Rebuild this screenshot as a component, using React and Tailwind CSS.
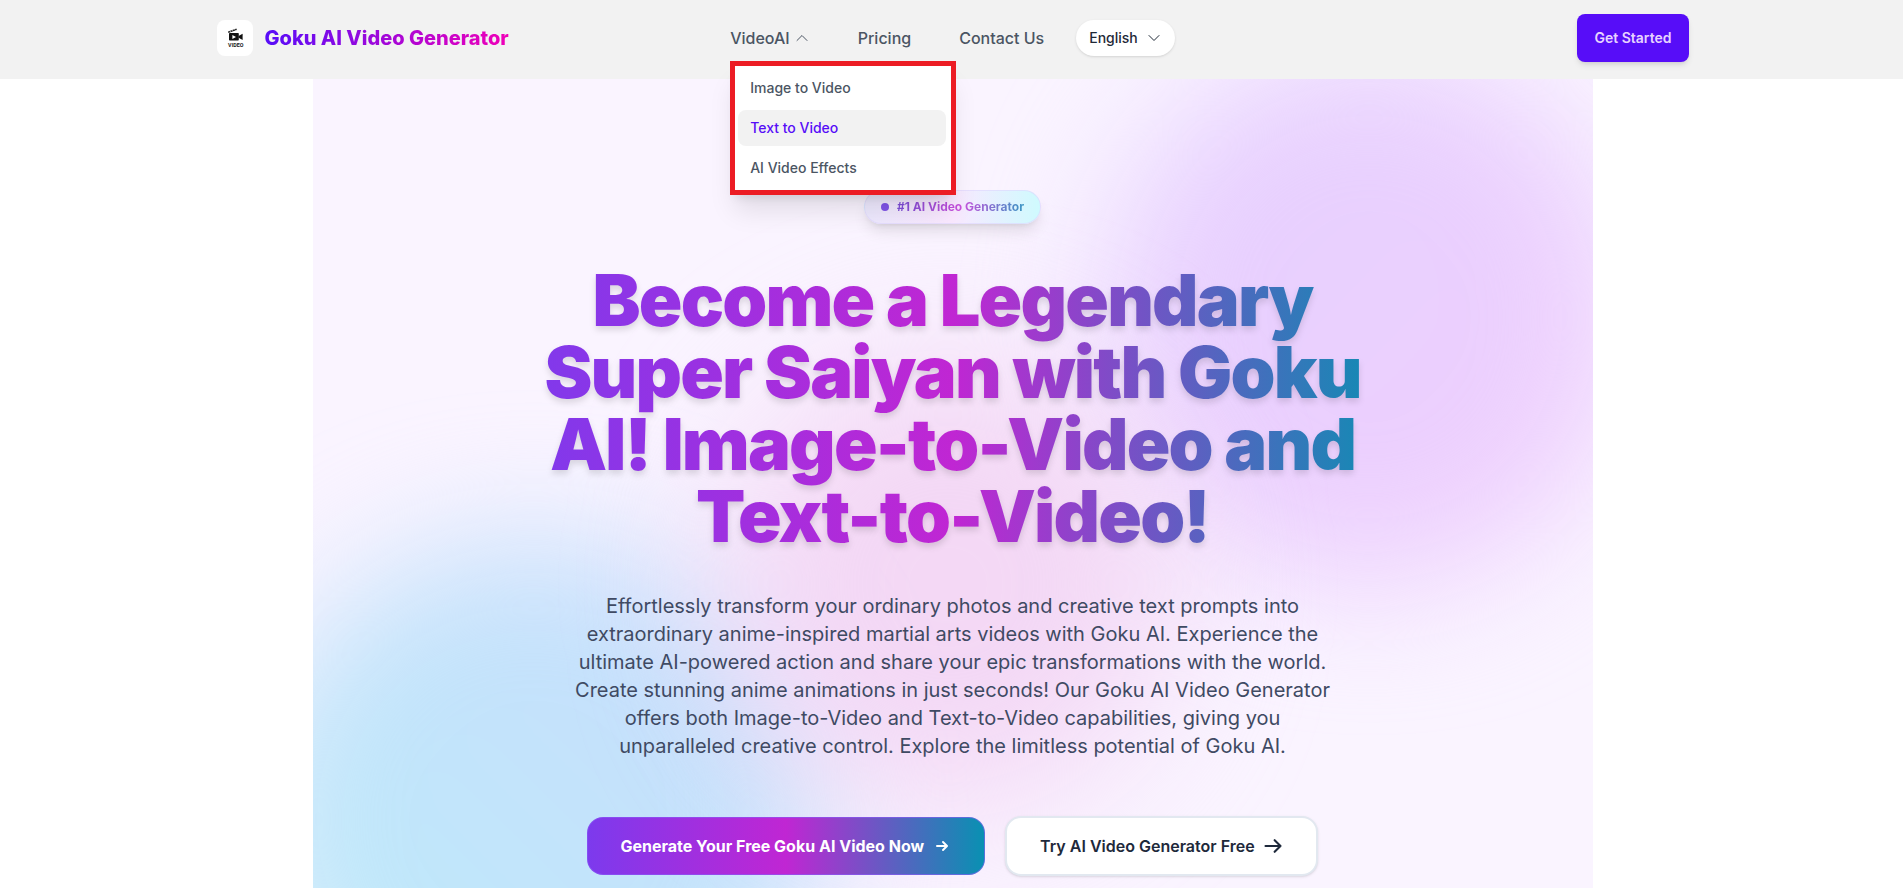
import React, { useState } from 'react';
import { HiOutlineChevronDown, HiOutlineChevronUp } from 'react-icons/hi2';

const menuItems = [
    { label: 'Image to Video', href: '#image-to-video' },
    { label: 'Text to Video', href: '#text-to-video' },
    { label: 'AI Video Effects', href: '#effects' },
];

const Logo = () => (
    <a href="#home" className="flex items-center gap-3">
        <span className="flex h-9 w-9 items-center justify-center rounded-lg bg-white">
            <svg viewBox="0 0 36 36" className="h-9 w-9" aria-hidden="true">
                <path d="M11 11.6 19.4 8.4l.5 1.6-8.5 3z" fill="#222" />
                <path d="m13 11 1 1.3m1.2-2.1 1 1.3m1.3-2.2 1 1.3" stroke="#fff" strokeWidth=".6" />
                <rect x="12" y="13" width="9.8" height="7.6" rx=".8" fill="#111" />
                <path d="m21.6 16 4-2.2v6.2l-4-2.2z" fill="#111" />
                <path d="m15.4 14.9 3.6 2-3.6 2z" fill="#fff" />
                <text x="18.8" y="26.8" textAnchor="middle" fontFamily="Roboto, sans-serif" fontSize="5.4" fontWeight="700" fill="#222">VIDEO</text>
            </svg>
        </span>
        <span className="bg-linear-to-r/srgb from-[#570df8] to-[#f000b8] bg-clip-text text-xl font-extrabold text-transparent">
            Goku AI Video Generator
        </span>
    </a>
);

const VideoMenu = () => {
    const [open, setOpen] = useState(true);

    return (
        <div className="relative">
            <button onClick={() => setOpen(!open)} aria-expanded={open} className="flex items-center gap-1">
                VideoAI
                {open ? <HiOutlineChevronUp className="h-4 w-4" /> : <HiOutlineChevronDown className="h-4 w-4" />}
            </button>
            {open && (
                <div className="absolute top-full left-0 z-20 mt-[11px] flex w-[226px] flex-col gap-1 border-[5px] border-[#ec1c24] bg-white py-1 pr-[5px] pl-[3px] text-sm shadow-xl">
                    {menuItems.map((item) => (
                        <a
                            key={item.label}
                            href={item.href}
                            className={`rounded-lg px-3 py-2 ${item.label === 'Text to Video' ? 'bg-[#f2f2f2] text-[#570df8]' : ''}`}
                        >
                            {item.label}
                        </a>
                    ))}
                </div>
            )}
        </div>
    );
};

const Header = () => (
    <header className="relative z-10 bg-[#f2f2f2] pl-[2px]">
        <div className="mx-auto grid h-[79px] max-w-[1472px] grid-cols-[1fr_auto_1fr] items-center pb-[3px]">
            <Logo />
            <nav className="flex items-center gap-12 font-medium text-[#4b5563]">
                <VideoMenu />
                <a href="#pricing">Pricing</a>
                <a href="#contact">Contact Us</a>
                <button className="-ml-4 flex h-9 items-center gap-2 rounded-full bg-white px-[13px] text-sm text-[#1f2937] shadow-sm">
                    English
                    <HiOutlineChevronDown className="h-4 w-4" />
                </button>
            </nav>
            <button className="h-12 justify-self-end rounded-lg bg-[#570df8] px-[17px] text-sm font-semibold text-[#e7d3ff] shadow-md">
                Get Started
            </button>
        </div>
    </header>
);

const Hero = () => (
    <section className="relative mx-auto flex max-w-7xl flex-col items-center overflow-hidden bg-[#faf4ff] pt-[111px] pb-16 text-center">
        {/* Soft colour blobs */}
        <div className="absolute -top-8 -right-9 h-[540px] w-[520px] rounded-full bg-linear-to-br/srgb from-[#e4d0ff] to-[#f0cffd] blur-[64px]" />
        <div className="absolute top-[460px] -left-16 h-[560px] w-[570px] rounded-full bg-linear-to-tr/srgb from-[#bcecf9] to-[#c9dcfd] blur-[64px]" />
        <div className="absolute top-[280px] left-[410px] h-[450px] w-[450px] rounded-full bg-[#f2d2f3]/85 blur-[72px]" />

        <div className="relative flex flex-col items-center px-8">
            <div className="flex items-center gap-2 rounded-full border border-[#ddd6fe]/60 bg-linear-to-r/srgb from-[#ede9fe] via-[#fae8ff] to-[#cffafe] px-4 py-2 text-xs font-bold shadow-lg">
                <span className="h-2 w-2 rounded-full bg-[#8054e8]" />
                <span className="bg-linear-to-r/srgb from-[#7c4fd8] via-[#c94fdc] to-[#3d97c4] bg-clip-text text-transparent">
                    #1 AI Video Generator
                </span>
            </div>
            <h1 className="mt-10 max-w-4xl bg-linear-to-r/srgb from-[#7c3aed] via-[#c026d3] to-[#0891b2] bg-clip-text text-7xl leading-none font-black tracking-tight text-transparent drop-shadow-[0_4px_3px_rgba(0,0,0,0.12)]">
                Become a Legendary Super Saiyan with Goku AI! Image-to-Video and Text-to-Video!
            </h1>
            <p className="mt-10 max-w-3xl text-xl leading-7 text-[#3f4a63]">
                Effortlessly transform your ordinary photos and creative text prompts into extraordinary anime-inspired
                martial arts videos with Goku AI. Experience the ultimate AI-powered action and share your epic
                transformations with the world. Create stunning anime animations in just seconds! Our Goku AI Video
                Generator offers both Image-to-Video and Text-to-Video capabilities, giving you unparalleled creative
                control. Explore the limitless potential of Goku AI.
            </p>
            <div className="mt-14 flex items-center gap-5">
                <a href="#generate" className="flex h-[58px] items-center gap-2 rounded-2xl border border-[#8b5cf6]/60 bg-linear-to-r/srgb from-[#7c3aed] via-[#c026d3] to-[#0891b2] bg-origin-border px-8 font-bold text-white">
                    Generate Your Free Goku AI Video Now
                    <svg viewBox="0 0 20 20" fill="currentColor" className="h-5 w-5" aria-hidden="true">
                        <path d="M10.293 5.293a1 1 0 011.414 0l4 4a1 1 0 010 1.414l-4 4a1 1 0 01-1.414-1.414L12.586 11H5a1 1 0 110-2h7.586l-2.293-2.293a1 1 0 010-1.414z" />
                    </svg>
                </a>
                <a href="#try" className="flex h-[60px] items-center gap-2 rounded-2xl border-2 border-[#e2e8f0] bg-white px-[33px] font-semibold text-[#1e293b] shadow-sm">
                    Try AI Video Generator Free
                    <svg viewBox="0 0 24 24" fill="none" stroke="currentColor" strokeWidth="2.5" strokeLinecap="round" strokeLinejoin="round" className="h-5 w-5" aria-hidden="true">
                        <path d="M14 5l7 7m0 0l-7 7m7-7H3" />
                    </svg>
                </a>
            </div>
        </div>
    </section>
);

const App = () => (
    <div className="min-h-screen bg-white font-['Inter',sans-serif]">
        <Header />
        <main className="pl-[2px]">
            <Hero />
        </main>
    </div>
);

export default App;
